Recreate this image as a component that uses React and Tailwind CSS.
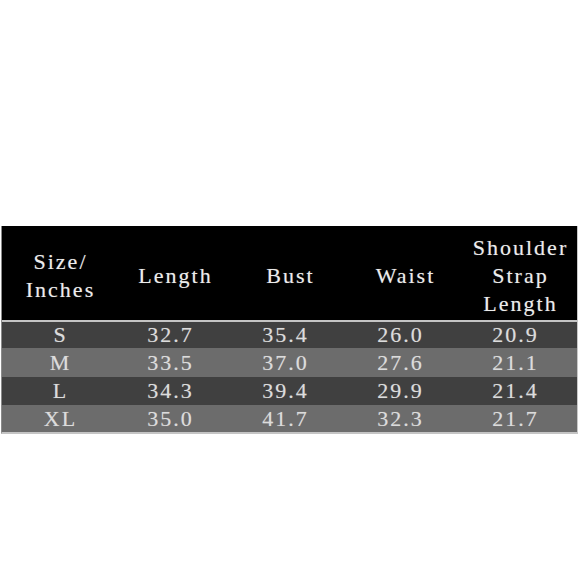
import React from "react";

const headers = [["Size/", "Inches"], ["Length"], ["Bust"], ["Waist"], ["Shoulder", "Strap", "Length"]];

const rows = [
  { size: "S", vals: ["32.7", "35.4", "26.0", "20.9"], bg: "bg-[#404040]", h: "h-[26px]" },
  { size: "M", vals: ["33.5", "37.0", "27.6", "21.1"], bg: "bg-[#6c6c6c]", h: "h-[29px]" },
  { size: "L", vals: ["34.3", "39.4", "29.9", "21.4"], bg: "bg-[#404040]", h: "h-[28px]" },
  { size: "XL", vals: ["35.0", "41.7", "32.3", "21.7"], bg: "bg-[#6c6c6c]", h: "h-[27px]" },
];

export default function App() {
  return (
    <div className="min-h-[580px] w-[580px] bg-white pt-[226px] font-['Liberation_Serif',serif] text-[22px] tracking-[2px] [text-shadow:0_0_1px_rgba(230,230,230,0.4)]">
      <div className="ml-[1px] w-[577px] border-x border-l-[#8a8a8a] border-r-[#c8c8c8] border-b-2 border-b-[#c4c4c4]">
        {/* Header */}
        <div className="grid grid-cols-5 h-[96px] pt-[5px] bg-black border-b-2 border-[#c4c4c4] text-[#ececec] leading-[28px]">
          {headers.map((lines, i) => (
            <div key={i} className="flex flex-col items-center justify-center pl-[2px]">
              {lines.map((l) => (
                <span key={l}>{l}</span>
              ))}
            </div>
          ))}
        </div>

        {/* Body */}
        {rows.map((r) => (
          <div key={r.size} className={`grid grid-cols-5 ${r.bg} ${r.h} text-[#dcdcdc] leading-none`}>
            <div className="flex items-center justify-center pl-[2px]">{r.size}</div>
            {r.vals.map((v, i) => (
              <div key={i} className="flex items-center justify-center pr-[8px]">
                {v}
              </div>
            ))}
          </div>
        ))}
      </div>
    </div>
  );
}
